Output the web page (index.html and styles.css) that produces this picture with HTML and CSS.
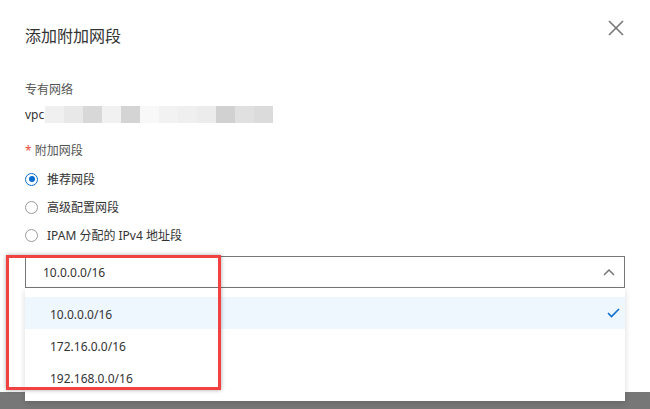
FILE: index.html
```html
<!DOCTYPE html>
<html lang="zh-CN">

<head>
    <meta charset="UTF-8">
    <meta name="viewport" content="width=device-width, initial-scale=1.0">
    <title>添加附加网段</title>
    <link rel="stylesheet" href="styles.css">
</head>

<body>
    <div class="dialog">
        <div class="dialog-header">
            <h1>添加附加网段</h1>
            <button class="close" aria-label="关闭">
                <svg width="16" height="16" viewBox="0 0 16 16">
                    <path d="M1 1 L15 15 M15 1 L1 15" stroke="#777" stroke-width="1.6" fill="none" />
                </svg>
            </button>
        </div>

        <div class="field-label first">专有网络</div>
        <div class="vpc-row">
            <span>vpc</span>
            <span class="mosaic">
                <i></i><i></i><i></i><i></i><i></i><i></i><i></i><i></i><i></i><i></i><i></i><i></i>
            </span>
        </div>

        <div class="field-label required"><span class="star">*</span> 附加网段</div>
        <div class="radios">
            <label class="radio checked"><span class="dot"></span>推荐网段</label>
            <label class="radio"><span class="dot"></span>高级配置网段</label>
            <label class="radio"><span class="dot"></span>IPAM 分配的 IPv4 地址段</label>
        </div>

        <div class="select-wrap">
            <div class="select">
                <span>10.0.0.0/16</span>
                <svg width="12" height="7" viewBox="0 0 12 7">
                    <path d="M1 6 L6 1 L11 6" stroke="#777" stroke-width="1.5" fill="none" />
                </svg>
            </div>
            <ul class="menu">
                <li class="active">10.0.0.0/16
                    <svg width="13" height="10" viewBox="0 0 13 10">
                        <path d="M1 5 L4.5 8.5 L12 1" stroke="#0a6ed1" stroke-width="1.6" fill="none" />
                    </svg>
                </li>
                <li>172.16.0.0/16</li>
                <li>192.168.0.0/16</li>
            </ul>
        </div>
    </div>

    <!-- 标注框 -->
    <div class="mark"></div>
</body>

</html>
```

FILE: styles.css
```css
body {
    margin: 0;
    height: 409px;
    font-family: "Noto Sans", "Noto Sans CJK SC", sans-serif;
    font-size: 12px;
    color: #333;
    background: linear-gradient(#8a8a8a, #777);
    overflow: hidden;
}

.dialog {
    height: 392px;
    padding: 24px 25px 0 25px;
    box-sizing: border-box;
    background-color: #fff;
}

.dialog-header {
    display: flex;
    justify-content: space-between;
    align-items: center;
    height: 24px;
}

h1 {
    margin: 0;
    font-size: 16px;
    font-weight: normal;
    line-height: 24px;
    color: #333;
}

.close {
    border: none;
    background: none;
    padding: 0;
    margin: -17px 1px 0 0;
    width: 16px;
    height: 16px;
    cursor: pointer;
}

.field-label {
    line-height: 20px;
    color: #555;
    margin-top: 18px;
}

.field-label.first {
    margin-top: 32px;
}

.star {
    color: #e84c3d;
}

.vpc-row {
    display: flex;
    align-items: center;
    height: 18px;
    margin-top: 5px;
    color: #333;
}

.mosaic {
    display: flex;
    height: 17px;
    margin-left: 1px;
}

.mosaic i {
    width: 19px;
    background: #f0f0f0;
}

.mosaic i:nth-child(2) { background: #e8e8e8; }
.mosaic i:nth-child(3) { background: #d8d8d8; }
.mosaic i:nth-child(4) { background: #f1f1f1; }
.mosaic i:nth-child(5) { background: #d4d4d4; }
.mosaic i:nth-child(6) { background: #f8f8f8; }
.mosaic i:nth-child(7) { background: #f2f2f2; }
.mosaic i:nth-child(8) { background: #efefef; }
.mosaic i:nth-child(9) { background: #ececec; }
.mosaic i:nth-child(10) { background: #d1d1d1; }
.mosaic i:nth-child(11) { background: #e0e0e0; }
.mosaic i:nth-child(12) { background: #dbdbdb; }

.radios {
    margin-top: 4px;
}

.radio {
    display: flex;
    align-items: center;
    height: 28px;
    color: #333;
}

.dot {
    width: 11px;
    height: 11px;
    border: 1px solid #999;
    border-radius: 50%;
    margin-right: 9px;
    box-sizing: content-box;
    position: relative;
}

.radio.checked .dot {
    border-color: #0a6ed1;
}

.radio.checked .dot::after {
    content: "";
    position: absolute;
    left: 2.5px;
    top: 2.5px;
    width: 6px;
    height: 6px;
    border-radius: 50%;
    background: #0a6ed1;
}

.select-wrap {
    position: relative;
    margin-top: 7px;
}

.select {
    display: flex;
    justify-content: space-between;
    align-items: center;
    height: 32px;
    padding: 0 9px 0 17px;
    border: 1px solid #777;
    box-sizing: border-box;
    width: 600px;
}

.menu {
    position: absolute;
    top: 32px;
    left: 0;
    width: 600px;
    margin: 0;
    padding: 9px 0 8px 0;
    list-style: none;
    background: #fff;
    box-shadow: 0 2px 6px rgba(0, 0, 0, 0.15);
}

.menu li {
    display: flex;
    justify-content: space-between;
    align-items: center;
    height: 32px;
    padding: 3px 5px 0 25px;
    box-sizing: border-box;
    color: #333;
}

.menu li.active {
    background: #eef6fe;
}

.menu li svg {
    margin-top: -3px;
}

.mark {
    position: absolute;
    left: 6px;
    top: 255px;
    width: 209px;
    height: 129px;
    border: 3px solid #f24141;
    box-shadow: 0 0 4px rgba(0, 0, 0, 0.35);
}
```
